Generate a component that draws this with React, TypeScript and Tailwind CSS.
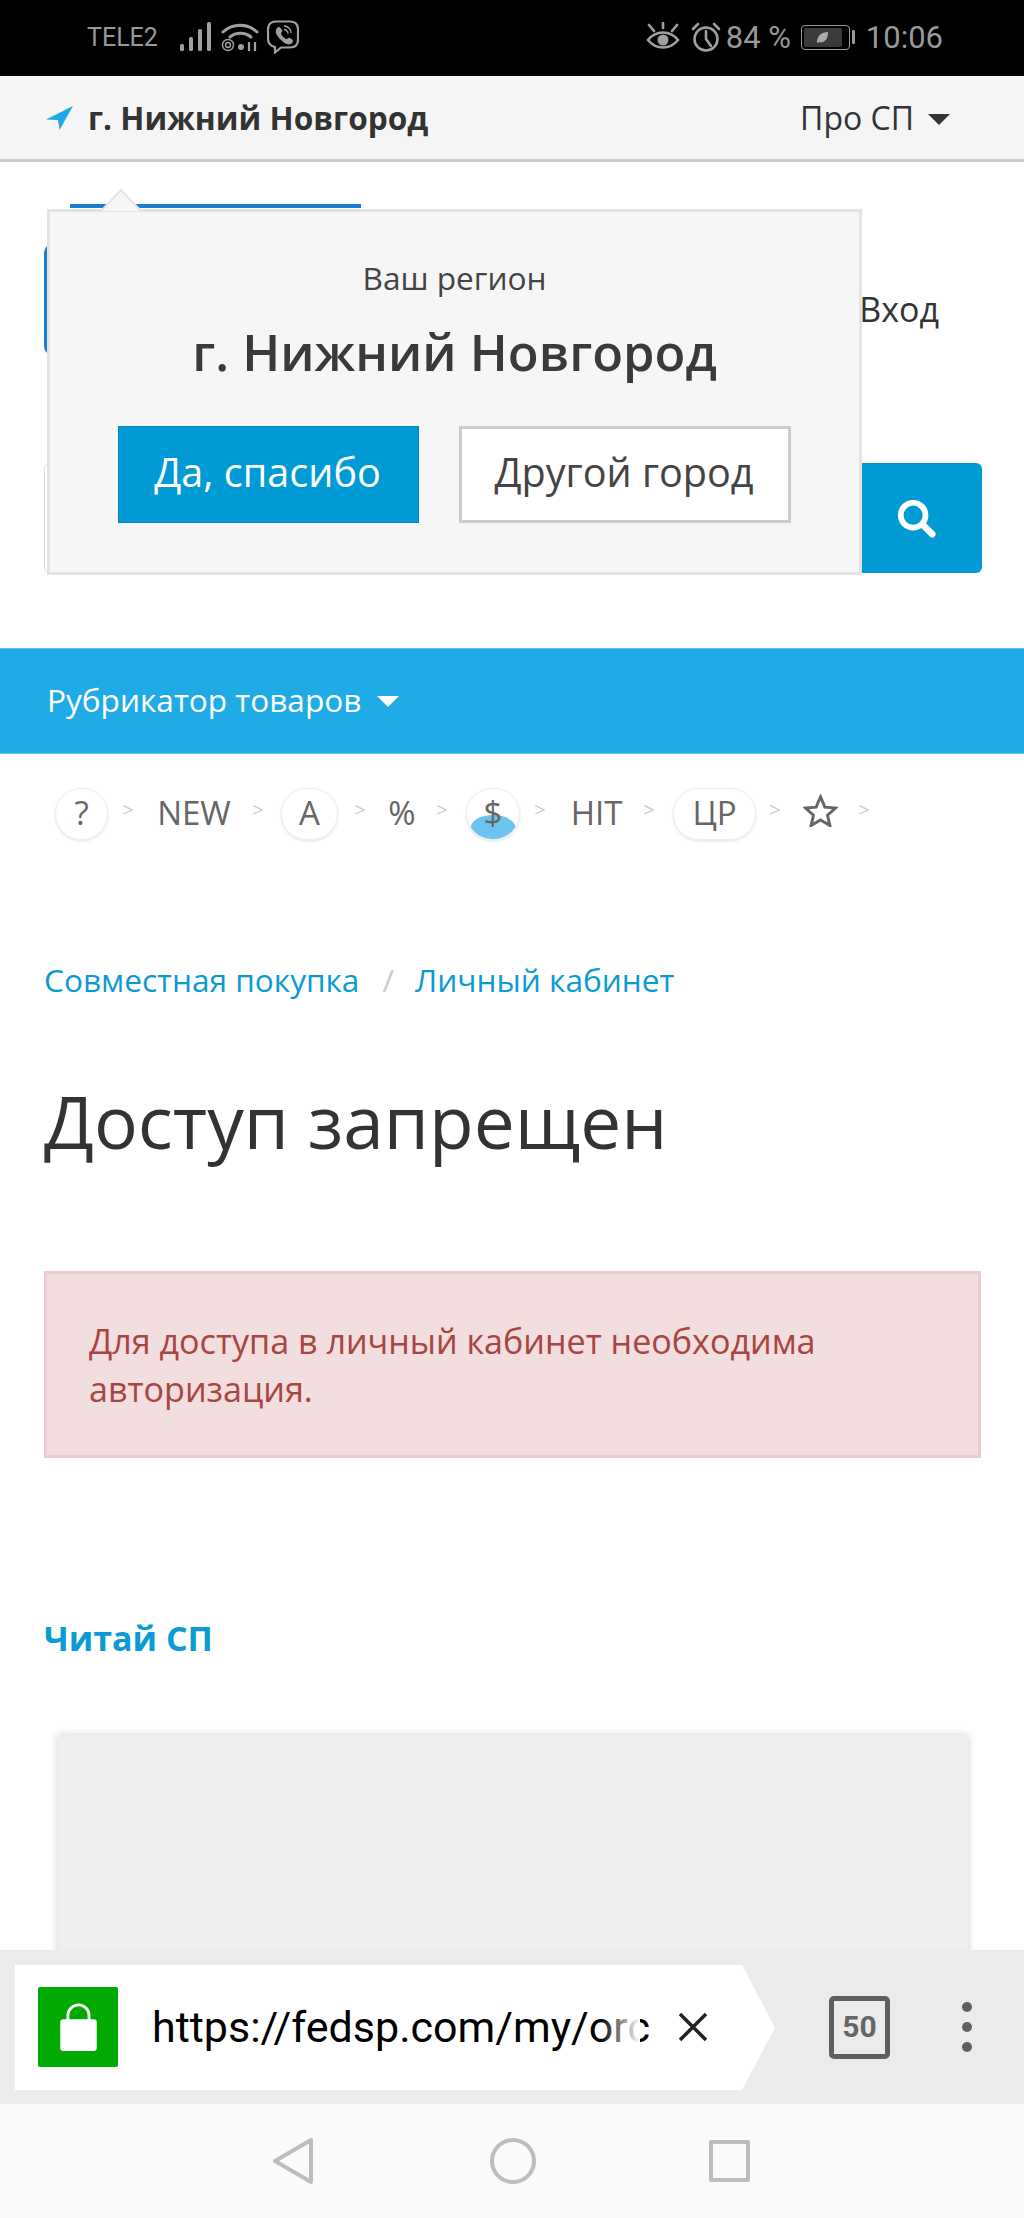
import React from "react";

const Tri = ({ className }: { className: string }) => (
  <svg viewBox="0 0 22 11" className={className} fill="currentColor"><path d="M0 0h22L11 11z" /></svg>
);

const Sep = ({ ml }: { ml: string }) => (
  <span className={`flex w-[12px] shrink-0 justify-center text-[20px] leading-none text-[#cccccc] -mt-[8px] ${ml}`}>&gt;</span>
);

const Circle = ({ w, ml, children, blob }: { w: string; ml: string; children: React.ReactNode; blob?: boolean }) => (
  <div className={`relative flex h-[52px] ${w} ${ml} shrink-0 items-center justify-center overflow-hidden rounded-full border border-[#eeeeee] shadow-[0_1px_3px_rgba(0,0,0,0.12)]`}>
    {blob && <div className="absolute bottom-[-4px] left-[3px] h-[28px] w-[46px] rounded-[50%] bg-[#6cc3ee]" />}
    <span className="relative -mt-[3px]">{children}</span>
  </div>
);

const Word = ({ w, ml, children }: { w: string; ml: string; children: React.ReactNode }) => (
  <span className={`-mt-[3px] flex shrink-0 justify-center whitespace-nowrap ${w} ${ml}`}>{children}</span>
);

export default function App() {
  return (
    <div className="flex h-[2218px] w-[1024px] flex-col overflow-hidden bg-white font-['Open_Sans',sans-serif] text-[#333333]">
      {/* status bar */}
      <div className="flex h-[76px] shrink-0 items-center bg-black pb-[2px] pl-[87px] pr-[81px] font-['Roboto',sans-serif] text-[#999999]">
        <span className="w-[93px] text-[25px] leading-none">TELE2</span>
        <svg viewBox="0 0 31 30" className="h-[30px] w-[31px]" fill="#a0a0a0">
          <rect x="0" y="22" width="4" height="7" rx="1.5" /><rect x="9" y="15" width="4" height="14" rx="1.5" /><rect x="18" y="7" width="4" height="22" rx="1.5" /><rect x="27" y="0" width="4" height="29" rx="1.5" />
        </svg>
        <svg viewBox="0 0 38 30" className="ml-[10px] h-[30px] w-[38px]" fill="none" stroke="#a0a0a0" strokeWidth="3">
          <path d="M2 10C12 1 26 1 36 10" strokeLinecap="round" /><path d="M9 15c6-5 15-5 21 0" strokeLinecap="round" />
          <circle cx="7" cy="23" r="5.500" strokeWidth="1.400" /><circle cx="7" cy="23" r="2.500" strokeWidth="1.400" />
          <circle cx="20" cy="25" r="3" fill="#a0a0a0" stroke="none" />
          <path d="M28 20v9M34 20v9" strokeWidth="2.200" />
        </svg>
        <svg viewBox="0 0 32 34" className="ml-[8px] h-[34px] w-[32px]" fill="none" stroke="#a0a0a0" strokeWidth="2.200">
          <path d="M9 1.500h14c5 0 8 3 8 8v10c0 5-3 8-8 8H14l-6 5v-5.500c-4-1-7-3.500-7-8V9.500c0-5 3-8 8-8z" />
          <path d="M10 8c2-2 3-1 5 2 1 2-1 2-1 4 1 2 3 4 5 5 2 0 2-2 4-1 3 2 4 3 2 5-3 3-7 1-11-3s-7-8-4-12z" fill="#a0a0a0" stroke="none" />
          <path d="M17 6c4 0 7 3 7 7M17 9.500c2 0 4 2 4 4" strokeWidth="1.400" />
        </svg>
        <div className="ml-auto flex items-center">
          <svg viewBox="0 0 34 30" className="h-[30px] w-[34px]" fill="none" stroke="#a0a0a0" strokeWidth="2.600">
            <path d="M2 18c8-10 22-10 30 0-8 10-22 10-30 0z" /><circle cx="17" cy="18" r="5.500" fill="#a0a0a0" stroke="none" />
            <path d="M3 3l5 6M31 3l-5 6M17 1v5" strokeLinecap="round" />
          </svg>
          <svg viewBox="0 0 30 30" className="ml-[11px] h-[30px] w-[30px]" fill="none" stroke="#a0a0a0" strokeWidth="2.600">
            <circle cx="15" cy="17" r="11.500" /><path d="M15 9v8l5 7M2 7l5-5M28 7l-5-5" strokeLinecap="round" />
          </svg>
          <span className="ml-[5px] w-[75px] text-[31px] leading-none">84 %</span>
          <div className="relative flex h-[25px] w-[49px] items-center rounded-[4px] border-[1.5px] border-[#999999] p-[2px]">
            <div className="flex h-full w-[38px] items-center justify-center rounded-[2px] bg-[#3a3a3a]">
              <svg viewBox="0 0 14 14" className="h-[13px] w-[13px]" fill="#aaaaaa"><path d="M1 13C1 5 6 1 13 1c0 8-4 12-10 11z" /></svg>
            </div>
          </div>
          <div className="ml-[2px] h-[14px] w-[3px] rounded-[1px] bg-[#999999]" />
          <span className="ml-[11px] text-[31px] leading-none">10:06</span>
        </div>
      </div>

      {/* top bar */}
      <div className="flex h-[86px] shrink-0 items-center border-b-[3px] border-[#cccccc] bg-[#f5f5f5] pl-[46px] pr-[74px]">
        <svg viewBox="0 0 27 24" className="h-[24px] w-[27px]" fill="#1fa9e6"><path d="M27 0L0 13.500l12 .5 1.500 10z" /></svg>
        <span className="ml-[15px] text-[31.6px] font-bold leading-none">г. Нижний Новгород</span>
        <span className="ml-auto text-[32px] leading-none">Про СП</span>
        <Tri className="ml-[14px] mt-[3px] h-[11px] w-[22px] text-[#333333]" />
      </div>

      {/* page */}
      <div className="relative min-h-0 flex-1 overflow-hidden">
        <div className="h-[152px] pl-[44px] pr-[85px] pt-[42px]">
          <div className="relative flex h-full items-start justify-between">
            <div className="relative h-full w-[320px]">
              <div className="ml-[26px] h-[4px] w-[291px] bg-[#1a7fd0]" />
              <div className="mt-[35px] h-[113px] w-[24px] rounded-l-[10px] border-l-[4px] border-[#1a7fd0]" />
            </div>
            <span className="mt-[85px] text-[34px] leading-[40px]">Вход</span>
          </div>
        </div>

        <div className="ml-[44px] mr-[42px] mt-[149px] flex h-[110px]">
          <div className="flex-1 rounded-l-[6px] border border-[#dddddd] bg-white" />
          <div className="flex w-[120px] items-center justify-center rounded-r-[6px] bg-[#009bd5] pr-[12px]">
            <svg viewBox="0 0 42 42" className="h-[40px] w-[40px]" fill="none" stroke="#ffffff"><circle cx="18" cy="18" r="13" strokeWidth="6" /><path d="M28 28l10 10" strokeWidth="7" strokeLinecap="round" /></svg>
          </div>
        </div>

        <div className="mt-[75px] flex h-[106px] items-center border-y border-[#63c3ee] bg-[#1fabe6] pb-[2px] pl-[47px] text-white">
          <span className="text-[31.6px] leading-none">Рубрикатор товаров</span>
          <Tri className="ml-[16px] mt-[2px] h-[11px] w-[22px] text-white" />
        </div>

        <div className="mt-[34px] flex h-[52px] items-center pl-[55px] text-[33px] leading-none text-[#666666]">
          <Circle w="w-[53px]" ml="ml-0">?</Circle>
          <Sep ml="ml-[14px]" />
          <Word w="w-[74px]" ml="ml-[23px]">NEW</Word>
          <Sep ml="ml-[21px]" />
          <Circle w="w-[57px]" ml="ml-[17px]">А</Circle>
          <Sep ml="ml-[16px]" />
          <Word w="w-[26px]" ml="ml-[23px]">%</Word>
          <Sep ml="ml-[21px]" />
          <Circle w="w-[54px]" ml="ml-[18px]" blob>$</Circle>
          <Sep ml="ml-[14px]" />
          <Word w="w-[51px]" ml="ml-[25px]">HIT</Word>
          <Sep ml="ml-[21px]" />
          <Circle w="w-[83px]" ml="ml-[18px]">ЦР</Circle>
          <Sep ml="ml-[13px]" />
          <svg viewBox="0 0 36 34" className="ml-[22px] -mt-[8px] h-[33px] w-[35px] shrink-0" fill="none" stroke="#666666" strokeWidth="3"><path d="M18 3l4.500 10.500 11 1-8.300 7.300 2.500 10.700L18 26.800 8.300 32.500l2.500-10.700L2.500 14.500l11-1z" /></svg>
          <Sep ml="ml-[20px]" />
        </div>

        <div className="mt-[118px] flex pl-[44px] text-[31.6px] leading-[44px] text-[#0a9bd2]">
          <span>Совместная покупка</span>
          <span className="ml-[23px] text-[#cccccc]">/</span>
          <span className="ml-[21px]">Личный кабинет</span>
        </div>

        <h1 className="mt-[74px] pl-[44px] text-[73px] font-normal leading-[90px] text-[#333333]">Доступ запрещен</h1>

        <div className="ml-[44px] mr-[43px] mt-[105px] h-[187px] border-[3px] border-[#ebccd1] bg-[#f2dede] px-[42px] pt-[43px] text-[34.1px] leading-[48px] text-[#a94442]">
          Для доступа в личный кабинет необходима авторизация.
        </div>

        <div className="mt-[158px] pl-[44px] text-[34px] font-bold leading-[44px] text-[#0a9bd2]">Читай СП</div>

        <div className="ml-[58px] mr-[56px] mt-[75px] h-[400px] bg-[#eeeeee] shadow-[0_0_8px_rgba(0,0,0,0.2)]" />

        {/* region popup */}
        <div className="absolute left-[47px] top-[47px] h-[366px] w-[815px] border-[3px] border-[#e3e3e3] bg-[#f6f6f6] pt-[44px] text-center">
          <svg viewBox="0 0 40 22" className="absolute left-[51px] top-[-23px] h-[22px] w-[40px]" fill="#f6f6f6" stroke="#e3e3e3" strokeWidth="2"><path d="M0 22L20 1l20 21" /></svg>
          <div className="text-[31.6px] leading-[44px] text-[#444444]">Ваш регион</div>
          <div className="mt-[20px] text-[50.6px] font-semibold leading-[64px] text-[#3a3a3a]">г. Нижний Новгород</div>
          <div className="mt-[42px] flex pl-[68px]">
            <button className="h-[97px] w-[301px] border border-[#0088bb] bg-[#009bd5] pb-[4px] pr-[2px] text-[39.6px] text-white">Да, спасибо</button>
            <button className="ml-[40px] h-[97px] w-[332px] border-[3px] border-[#cccccc] bg-white pb-[4px] pr-[2px] text-[39.6px] text-[#444444]">Другой город</button>
          </div>
        </div>
      </div>

      {/* browser bar */}
      <div className="flex h-[154px] shrink-0 items-center bg-[#ebebeb] pl-[15px]">
        <div className="relative flex h-[125px] w-[727px] items-center bg-white pl-[23px]">
          <div className="flex h-[80px] w-[80px] items-center justify-center rounded-[2px] bg-[#00aa00]">
            <svg viewBox="0 0 40 50" className="h-[48px] w-[39px]"><path d="M9 22V13a11 11 0 0 1 22 0v9" fill="none" stroke="#ffffff" strokeWidth="3" /><rect x="1" y="17" width="38" height="33" rx="3" fill="#ffffff" /></svg>
          </div>
          <div className="relative ml-[34px] w-[500px] whitespace-nowrap font-['Roboto',sans-serif] text-[43px] leading-[60px] text-black">
            https://fedsp.com/my/orc
            <div className="absolute inset-y-0 right-[12px] w-[40px] bg-gradient-to-r from-transparent to-white" />
          </div>
          <svg viewBox="0 0 30 30" className="ml-[26px] h-[30px] w-[30px]" fill="none" stroke="#222222" strokeWidth="3.500"><path d="M2 2l26 26M28 2L2 28" /></svg>
          <svg viewBox="0 0 34 125" className="absolute left-full top-0 h-[125px] w-[34px]" fill="#ffffff"><path d="M0 0l33 62.500L0 125z" /></svg>
        </div>
        <div className="ml-[87px] flex h-[63px] w-[61px] items-center justify-center rounded-[5px] border-[5px] border-[#5f5f5f] font-['Roboto',sans-serif] text-[30px] font-bold leading-none text-[#666666]">50</div>
        <div className="ml-[72px] flex flex-col gap-[10px]">
          <div className="h-[10px] w-[10px] rounded-full bg-[#5f5f5f]" />
          <div className="h-[10px] w-[10px] rounded-full bg-[#5f5f5f]" />
          <div className="h-[10px] w-[10px] rounded-full bg-[#5f5f5f]" />
        </div>
      </div>

      {/* nav bar */}
      <div className="flex h-[114px] shrink-0 items-center bg-[#fafafa] pl-[273px]">
        <svg viewBox="0 0 40 46" className="h-[46px] w-[40px]" fill="none" stroke="#bdbdbd" strokeWidth="4" strokeLinejoin="round"><path d="M38 2v42L2 23z" /></svg>
        <div className="ml-[177px] h-[46px] w-[46px] rounded-full border-[4px] border-[#bdbdbd]" />
        <div className="ml-[173px] h-[42px] w-[41px] rounded-[2px] border-[4px] border-[#bdbdbd]" />
      </div>
    </div>
  );
}
